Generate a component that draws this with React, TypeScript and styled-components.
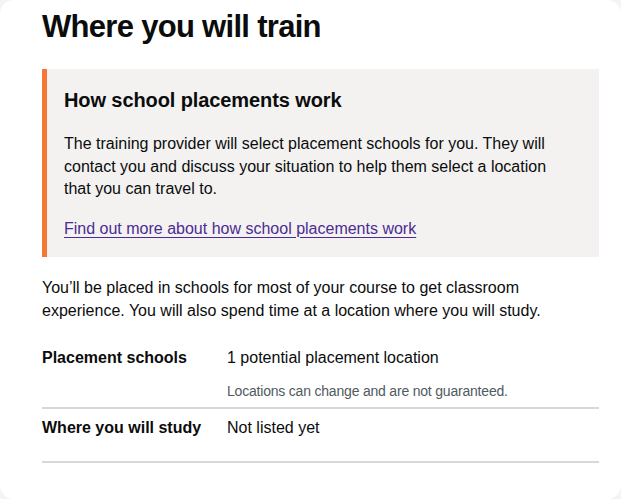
import React from 'react';
import styled, { createGlobalStyle } from 'styled-components';

const GlobalStyle = createGlobalStyle`
  html, body {
    margin: 0;
    padding: 0;
    background: #f4f4f4;
  }
  body {
    font-family: "Liberation Sans", Arial, sans-serif;
    color: #0b0c0c;
    -webkit-font-smoothing: antialiased;
  }
`;

const Card = styled.main`
  box-sizing: border-box;
  width: 621px;
  height: 499px;
  background: #ffffff;
  border-radius: 14px;
  padding: 7px 22px 0 42px;
  overflow: hidden;
`;

const Title = styled.h1`
  margin: 0 0 22px;
  font-size: 31px;
  line-height: 40px;
  font-weight: 700;
  letter-spacing: -0.7px;
`;

const Inset = styled.div`
  background: #f3f2f1;
  border-left: 5px solid #f47738;
  padding: 18px 17px 17px;
`;

const InsetHeading = styled.h2`
  margin: 0 0 19px;
  font-size: 20px;
  line-height: 27px;
  font-weight: 700;
  letter-spacing: -0.1px;
`;

const Body = styled.p<{ $gap?: number }>`
  margin: 0 0 ${(p) => p.$gap ?? 0}px;
  max-width: 500px;
  font-size: 16px;
  line-height: 22.5px;
`;

const Link = styled.a`
  color: #4c2c92;
  text-decoration: underline;
  text-decoration-thickness: 1px;
  text-underline-offset: 3px;
  font-size: 16px;
  line-height: 22px;
`;

const Intro = styled(Body)`
  max-width: none;
  margin-top: 19px;
  margin-bottom: 17px;
  line-height: 23px;
`;

const Summary = styled.dl`
  margin: 0;
`;

const Row = styled.div<{ $bottom?: number }>`
  display: grid;
  grid-template-columns: 185px 1fr;
  border-bottom: 2px solid #d8d8d8;
  padding: 8px 0 ${(p) => p.$bottom ?? 7}px;
`;

const Key = styled.dt`
  font-size: 16px;
  line-height: 22px;
  font-weight: 700;
`;

const Value = styled.dd`
  margin: 0;
  font-size: 16px;
  line-height: 22px;
`;

const Hint = styled.div`
  margin-top: 13px;
  font-size: 14px;
  line-height: 18px;
  color: #505a5f;
  letter-spacing: -0.2px;
`;

export default function App() {
  return (
    <>
      <GlobalStyle />
      <Card>
        <Title>Where you will train</Title>
        <Inset>
          <InsetHeading>How school placements work</InsetHeading>
          <Body $gap={17}>
            The training provider will select placement schools for you. They will contact you and
            discuss your situation to help them select a location that you can travel to.
          </Body>
          <Link href="#">Find out more about how school placements work</Link>
        </Inset>
        <Intro>
          You’ll be placed in schools for most of your course to get classroom experience. You will
          also spend time at a location where you will study.
        </Intro>
        <Summary>
          <Row>
            <Key>Placement schools</Key>
            <Value>
              1 potential placement location
              <Hint>Locations can change and are not guaranteed.</Hint>
            </Value>
          </Row>
          <Row $bottom={22}>
            <Key>Where you will study</Key>
            <Value>Not listed yet</Value>
          </Row>
        </Summary>
      </Card>
    </>
  );
}
